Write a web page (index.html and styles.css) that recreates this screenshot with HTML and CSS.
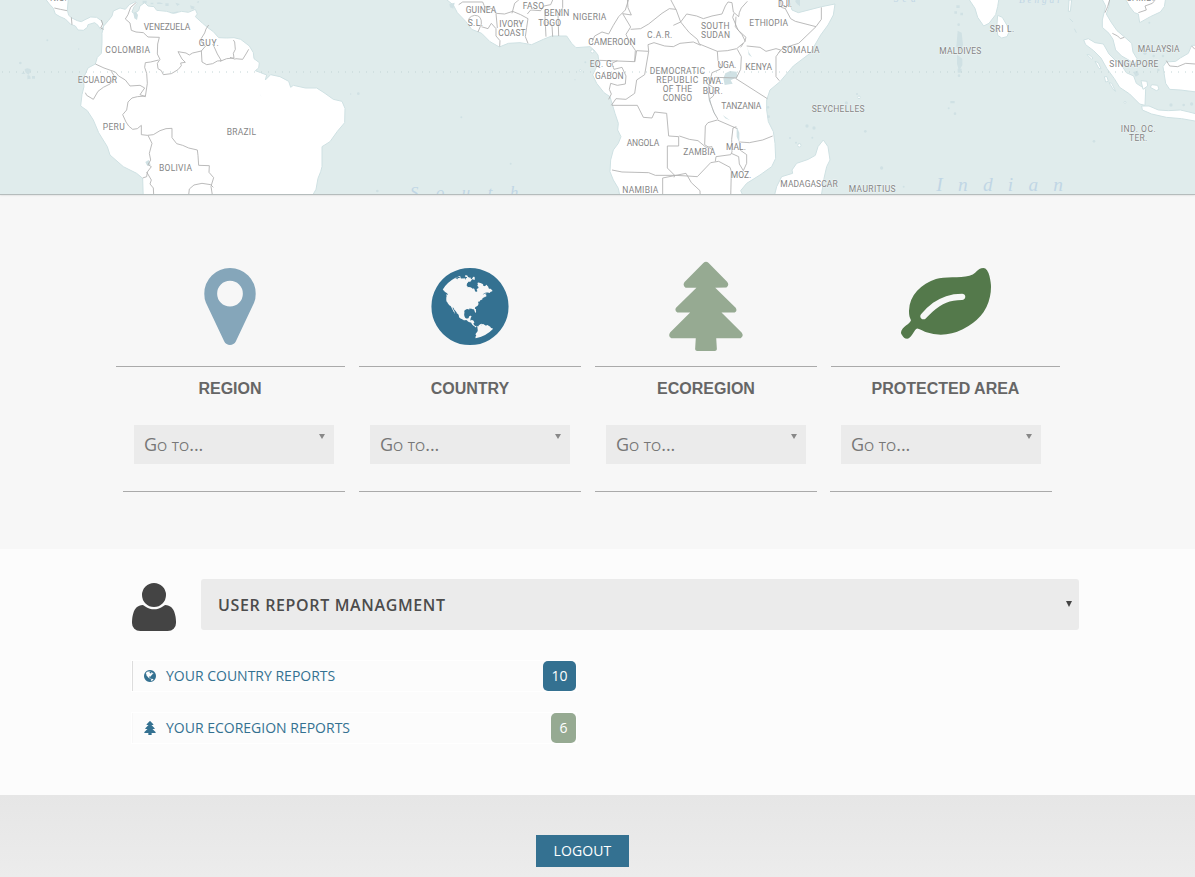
FILE: index.html
```html
<!DOCTYPE html>
<html lang="en">
<head>
<meta charset="utf-8">
<title>Reports</title>
<link rel="stylesheet" href="styles.css">
</head>
<body>
<div class="map">
<svg class="map-svg" width="1195" height="195" viewBox="0 0 1195 195">
  <!-- Americas -->
  <g transform="scale(.333333)">
    <g class="land">
      <path d="M135 -5L148 12 160 25 166 42 180 50 196 57 212 73 226 78 234 90 250 91 262 82 264 74 284 68 294 76 302 89 311 78 304 62 290 52 272 51 255 59 244 65 232 62 216 54 206 46 202 30 205 -5Z"/>
      <path d="M311 78L325 62 336 48 340 33 360 24 376 28 388 14 406 5 412 10 402 20 396 36 402 40 416 32 420 18 434 8 444 18 462 20 470 31 500 34 520 40 545 34 565 37 586 28 592 42 586 50 608 70 622 82 640 95 656 113 680 114 702 113 722 118 748 138 760 158 762 176 778 188 776 204 766 212 782 218 800 225 796 240 812 224 840 230 866 244 872 262 880 256 916 264 950 264 972 278 1000 298 1026 304 1035 325 1034 368 1012 394 990 425 966 440 966 500 962 515 954 535 948 568 930 600 430 600 428 535 410 520 370 500 330 465 322 440 296 398 280 360 262 332 242 318 246 284 252 260 250 235 264 204 286 192 292 172 304 160 306 130 306 100Z"/>
    </g>
    <g class="water">
      <path d="M400 40l8-5 6 10-3 15-8-5zM436 486l10-6 6 14-10 4zM780 282l5 10-3-7z"/>
      <circle cx="142" cy="121" r="3"/><circle cx="236" cy="147" r="2"/><circle cx="61" cy="189" r="4"/><circle cx="1075" cy="281" r="4"/><circle cx="1052" cy="282" r="2"/><circle cx="1132" cy="573" r="4"/>
      <path d="M64 222q6-10 12 0zM74 208q10-8 20 2l-8 14q-12-4-12-16zM82 226q10-2 10 10l-10 2zM96 228h9v8h-9z"/>
      <path d="M428 2h12v8h-12zM452 8h8v5h-8zM470 8q10-4 20 4h-18zM496 10h10v8h-10zM526 8l14 4-8 6zM570 16l14 4-3 8-8-2zM590 6l8-4-3 8zM510 40l24-6-4 6z"/>
    </g>
    <g class="border">
      <path d="M163 24l18 4 20 4M214 52l2 22M311 88l-9-4 6-12-4-12M408 8l-16 14-8 22-8 13 14 12 4 22 14 5 22 2 14 13 34 1-5 20-1 30 8 16-8 12 2 16 10 6 6 12 24-3 20-12 10-12-2-8 14-2-10-10-12-22 24 4 10 6 10-6 26-6 12-14-10-12-2-12 10-16 4-12 8-12M604 152l2 34 14 8 18-3 14-8 12-1-12-20-8-18-6-12M660 184l20-8 22-2-2-14 6-12-2-22-4-6M706 176l22 2 10-16 8-14M706 178l-16-6"/>
      <path d="M476 180l-24 6-16 2-2 14 6 18 2 30-6 40-16-6 14-20-14-8-30 2-14-18-20-12-10-12-34-12-26-12M334 214l10 16-14 22-20 10-16 12-14 24-20-12-4-8M436 288l-24 2-16 4-12 12-4 24-12 14 10 22 8 12 12 10 14-2 12-10v28l18 2 18-2 20-12 18-6 18-1v28l14 18 18 5 18 8 26 6 2 16 2 30 32 1-1 20 14 16-8 26 4 26M444 406l12 24-8 30 4 20-8 14 10 6-12 16-2 14-12 4M440 516l14 24-4 12 10 12 1 20M566 585l2-18 14-12 24-5 26 4 8 8"/>
    </g>
    <g class="label">
      <text x="150" y="4" textLength="50">NIC.</text>
      <text x="431" y="90" textLength="140">VENEZUELA</text>
      <text x="316" y="159" textLength="134">COLOMBIA</text>
      <text x="596" y="140" textLength="60">GUY.</text>
      <text x="233" y="250" textLength="118">ECUADOR</text>
      <text x="308" y="392" textLength="66">PERU</text>
      <text x="680" y="405" textLength="88">BRAZIL</text>
      <text x="477" y="515" textLength="99">BOLIVIA</text>
    </g>
  </g>
  <!-- Africa -->
  <g transform="translate(400 0) scale(.333333)">
    <g class="land">
      <path d="M135 -5L160 15 172 38 198 65 215 88 245 100 270 125 298 141 325 130 360 128 395 134 430 118 455 108 500 108 515 130 528 143 570 140 582 150 594 165 596 180 590 200 578 225 590 250 612 278 630 290 636 310 645 340 655 370 653 390 663 410 655 430 640 450 632 480 630 515 640 540 655 565 662 600 1035 600 1022 572 1040 550 1080 525 1115 500 1127 475 1125 430 1120 395 1105 365 1100 330 1100 300 1110 270 1140 245 1180 198 1230 160 1262 105 1284 75 1300 45 1305 12 1265 20 1195 38 1176 30 1165 -5Z"/>
      <path d="M1120 600L1130 560 1145 530 1178 520 1176 510 1190 490 1225 478 1246 466 1254 440 1270 420 1284 440 1290 480 1280 500 1272 535 1262 600Z"/>
      <circle cx="577" cy="154" r="5"/><circle cx="541" cy="212" r="3"/>
    </g>
    <g class="water">
      <path d="M976 220l14-7 20 2 2 16-20 10 6 10-24 4-4-20zM1042 140l4 16 10 16-10-8zM930 292l4 26 20 40-14-22-14-36zM1010 380l8 18v30l-8-18zM968 345l22 16-14-6zM1188 -5l-2 10 6 8 8 6V-5zM148 12l16-4-4 18-10-4z"/>
      <circle cx="184" cy="352" r="3"/><circle cx="332" cy="491" r="3"/><circle cx="556" cy="187" r="3"/><circle cx="525" cy="239" r="2"/><circle cx="1170" cy="414" r="3"/><circle cx="1188" cy="428" r="3"/><circle cx="1198" cy="434" r="4"/><circle cx="1104" cy="322" r="4"/><circle cx="1106" cy="350" r="4"/>
    </g>
    <g class="border">
      <path d="M176 14l12-8h60l6 14 22 6 12 14 26 2 24-8 24 10 22 12-4 26-4 28 8 20M206 68q-4-18 18-22 22 0 20 26l-10 24M244 80l20 6 10-16 14 16v22l12 14-1 18M288 40l4 44M336 40l8-30 14-12M382 42l10-12 30 2 10-14 20-4 6-14M434 30l4 80M440 66l16 10 2 34M474 42l2 66M488 -5v28l-12 20M576 126l8-18 22-12 20 6 14-26 16-26 20-20 10-32M682 -5l2 28 10 22-26-4 24 40-14 22 10 22 18 26-2 34-106-4M692 88l30-2 24-14 40-32 22-14 20 2 14 38-22 10M810 -5l18 34M842 66l16 20 10 12 24 20 6 14 54 22 30-2 28-6 24-20 4-14-24-22-16-38 4-12M842 66l18-24 30 6 20 8 26-8 30-6 10-24 8-12 12 2 4 28 16 14 2-12 6-14 18-20M704 186l6-34 36 2-2-20 18-6 32 10 26 2 20-10 40-4 22 10"/>
      <path d="M746 154l-12 70-24 16-6 40-26 18-30-2-14 20M652 182l-16 8 6 18 24-6 12 26-2 24-24 4-20-6-4 18 6 14-8 16M636 316h76l18 36 26 2 8-18 36 4 6 68 30 2v28h-34v66l22 22-2 6M838 408l30 10 26 4 24 20 18-2 2 10-24-16 2-56 8-10 28-8 60 26M636 510l30 6 80 2 20 8 60 0 36 2 30 2 40-42 24-4 34 18 4 12-2 80M788 600v-66l70-14 16 28 26 24 1 28M946 484l2-14 44-6 4-8-1-38 4-34 10-4M994 460l22 10 2 22 12 20 10-22 0-26-20-14-2-24 30 2 40-8 30-12M952 154l2 28 10 16-4 10-24 10-12 52 4 28 14 40 12 20M1012 148l12 22-2 38-14 28 94 60M946 232l62 2M920 250l26 16-6 22-10 8M1030 130l-8 12M1040 138l40 4 18 12 30-8 14 4-14 20v60l10 12M1008 50l-2 30 20 24 10 20M1142 0l2 22 12 4 8-12M1156 26l16 30 14 8 62 16 16-22V22M1248 80l-52 50-46 14-14 14"/>
    </g>
    <g class="label">
      <text x="197" y="41" textLength="92">GUINEA</text>
      <text x="342" y="2" textLength="92">BURKINA</text>
      <text x="368" y="28" textLength="64">FASO</text>
      <text x="433" y="50" textLength="75">BENIN</text>
      <text x="415" y="79" textLength="68">TOGO</text>
      <text x="203" y="80" textLength="46">S.L.</text>
      <text x="298" y="82" textLength="73">IVORY</text>
      <text x="295" y="109" textLength="82">COAST</text>
      <text x="518" y="62" textLength="101">NIGERIA</text>
      <text x="565" y="135" textLength="142">CAMEROON</text>
      <text x="741" y="114" textLength="76">C.A.R.</text>
      <text x="903" y="88" textLength="86">SOUTH</text>
      <text x="903" y="115" textLength="87">SUDAN</text>
      <text x="1048" y="79" textLength="116">ETHIOPIA</text>
      <text x="1134" y="21" textLength="42">DJI.</text>
      <text x="569" y="201" textLength="74">EQ. G.</text>
      <text x="585" y="237" textLength="86">GABON</text>
      <text x="749" y="223" textLength="166">DEMOCRATIC</text>
      <text x="769" y="250" textLength="126">REPUBLIC</text>
      <text x="788" y="277" textLength="88">OF THE</text>
      <text x="788" y="304" textLength="88">CONGO</text>
      <text x="908" y="252" textLength="62">RWA.</text>
      <text x="908" y="282" textLength="60">BUR.</text>
      <text x="953" y="205" textLength="56">UGA.</text>
      <text x="1036" y="211" textLength="80">KENYA</text>
      <text x="1145" y="159" textLength="114">SOMALIA</text>
      <text x="964" y="328" textLength="120">TANZANIA</text>
      <text x="680" y="438" textLength="98">ANGOLA</text>
      <text x="850" y="466" textLength="96">ZAMBIA</text>
      <text x="978" y="450" textLength="60">MAL.</text>
      <text x="992" y="536" textLength="62">MOZ.</text>
      <text x="667" y="581" textLength="108">NAMIBIA</text>
      <text x="1141" y="563" textLength="172">MADAGASCAR</text>
    </g>
    <text class="sea" x="30" y="594" font-size="50" textLength="325">South</text>
  </g>
  <!-- Indian Ocean -->
  <g transform="translate(795 0) scale(.333333)">
    <g class="land">
      <path d="M520 -5L540 25 548 52 566 78 582 70 602 44 608 20 612 -5ZM608 46L622 52 636 76 642 96 636 110 620 114 608 106 606 72Z"/>
      <path d="M920 -5L932 18 922 60 922 82 942 100 954 118 962 150 980 168 1008 184 1020 196 1026 176 1014 156 1010 130 990 112 966 92 948 66 934 42 942 20 944 -5ZM990 -5L1004 20 1018 38 1030 42 1034 68 1066 50 1096 36 1108 20 1112 -5ZM866 120L880 116 900 128 925 132 942 162 960 180 976 190 994 218 1016 228 1024 250 1052 268 1050 316 1034 312 1004 282 974 262 958 236 936 206 918 174 896 152 872 134ZM1205 136L1190 136 1180 160 1156 174 1142 184 1114 186 1104 200 1112 250 1124 268 1156 270 1205 276ZM1040 318L1062 318 1090 330 1120 332 1156 330 1182 336 1205 342V364L1160 356 1114 352 1070 342 1042 330Z"/>
      <path d="M876 164l14 14 4-4-12-10zM900 184l12 22 6 0-8-18zM928 230l4 16 8-2-4-14zM942 248l14 22 6 4-12-24zM1038 242l18 2 2 14-14 10zM1066 262l4-8 18 2 4 12-8 4zM822 0l-2 34 6 0 4-34zM824 56l10 10M838 86l6 12"/>
      <circle cx="13" cy="436" r="5"/><circle cx="192" cy="292" r="4"/><circle cx="990" cy="307" r="3"/>
    </g>
    <g class="water">
      <path d="M484 16h10v8h-10zM478 34h8v7h-8zM496 38h8v8h-8zM488 92l12 6 4 36-8 22-12-16zM486 164l16 12v20l-10 16-6-20zM488 206h12v12h-12zM1014 216l14-4 4 12-10 6zM466 303h13v7h-13z"/>
      <circle cx="491" cy="74" r="4"/><circle cx="492" cy="227" r="4"/><circle cx="461" cy="325" r="3"/><circle cx="480" cy="341" r="4"/><circle cx="154" cy="309" r="5"/><circle cx="186" cy="282" r="3"/><circle cx="211" cy="394" r="4"/><circle cx="260" cy="504" r="5"/><circle cx="326" cy="560" r="3"/><circle cx="36" cy="378" r="5"/><circle cx="57" cy="384" r="5"/><circle cx="52" cy="413" r="3"/><circle cx="897" cy="424" r="4"/><circle cx="1063" cy="68" r="3"/><circle cx="1050" cy="160" r="5"/><circle cx="1076" cy="168" r="4"/><circle cx="1104" cy="168" r="4"/><circle cx="1090" cy="210" r="4"/><circle cx="1128" cy="315" r="5"/><circle cx="1166" cy="315" r="4"/><circle cx="1190" cy="312" r="5"/>
    </g>
    <g class="border">
      <path d="M944 0l-6 20-8 18M952 100l16 8 8 8 12-4M1030 38l24-8-4-12 22-8 10-12M1114 182l10 16 24 2 24-10 28 2M1190 138l10 10"/>
    </g>
    <g class="label">
      <text x="584" y="96" textLength="74">SRI L.</text>
      <text x="433" y="163" textLength="126">MALDIVES</text>
      <text x="50" y="338" textLength="159">SEYCHELLES</text>
      <text x="161" y="578" textLength="141">MAURITIUS</text>
      <text x="977" y="396" textLength="105">IND. OC.</text>
      <text x="1002" y="423" textLength="55">TER.</text>
      <text x="943" y="203" textLength="147">SINGAPORE</text>
      <text x="1028" y="158" textLength="126">MALAYSIA</text>
      <text x="994" y="5" textLength="84">CAMB.</text>
    </g>
    <text class="sea" x="296" y="6" font-size="28" textLength="66">Sea</text>
    <text class="sea" x="672" y="9" font-size="28" textLength="122">Bengal</text>
    <text class="sea" x="424" y="573" font-size="58" textLength="380">Indian</text>
  </g>
  <path class="equator" d="M2 72H1195"/>
</svg>
</div>

<main class="picker">
  <section class="column">
    <div class="column-head head-first">
      <svg class="icon region" viewBox="0 0 1792 1792"><path d="M1152 640q0-106-75-181t-181-75-181 75-75 181 75 181 181 75 181-75 75-181zm256 0q0 109-33 179l-364 774q-16 33-47.500 52t-67.500 19-67.500-19-46.500-52l-365-774q-33-70-33-179 0-212 150-362t362-150 362 150 150 362z"/></svg>
    </div>
    <h2>REGION</h2>
    <div class="select">Go to...<i class="arrow"></i></div>
    <div class="rule"></div>
  </section>
  <section class="column">
    <div class="column-head">
      <svg class="icon country" viewBox="0 0 1792 1792"><path id="globe" d="M896 128q209 0 385.500 103t279.500 279.500 103 385.500-103 385.500-279.500 279.500-385.500 103-385.500-103-279.500-279.500-103-385.500 103-385.500 279.500-279.500 385.500-103zm274 521q-2 1-9.500 9.500t-13.500 9.500q2 0 4.500-5t5-11 3.500-7q6-7 22-15 14-6 52-12 34-8 51 11-2-2 9.500-13t14.500-12q3-2 15-4.500t15-7.500l2-22q-12 1-17.500-7t-6.500-21q0 2-6 8 0-7-4.500-8t-11.500 1-9 1q-10-3-15-7.500t-8-16.500-4-15q-2-5-9.500-11t-9.500-10q-1-2-2.500-5.500t-3-6.500-4-5.500-5.500-2.500-7 5-7.500 10-4.500 5q-3-2-6-1.500t-4.500 1-4.500 3-5 3.500q-3 2-8.500 3t-8.500 2q15-5-1-11-10-4-16-3 9-4 7.500-12t-8.500-14h5q-1-4-8.500-8.500t-17.500-8.500-13-6q-8-5-34-9.500t-33-.5q-5 6-4.500 10.500t4 14 3.500 12.500q1 6-5.500 13t-6.500 12q0 7 14 15.500t10 21.500q-3 8-16 16t-16 12q-5 8-1.500 18.500t10.500 16.500q2 2 1.500 4t-3.500 4.500-5.500 4-6.500 3.500l-3 2q-11 5-20.500-6t-13.500-26q-7-25-16-30-23-8-29 1-5-13-41-26-25-9-58-4 6-1 0-15-7-15-19-12 3-6 4-17.500t1-13.500q3-13 12-23 1-1 7-8.500t9.500-13.500.5-6q35 4 50-11 5-5 11.500-17t10.500-17q9-6 14-5.500t14.500 5.500 14.500 5q14 1 15.500-11t-7.500-20q12 1 3-17-4-7-8-9-12-4-27 5-8 4 2 8-1-1-9.500 10.500t-16.500 17.500-16-5q-1-1-5.500-13.500t-9.500-13.500q-8 0-16 15 3-8-11-15t-24-8q19-12-8-27-7-4-20.500-5t-19.500 4q-5 7-5.500 11.500t5 8 10.500 5.500 11.500 4 8.500 3q14 10 8 14-2 1-8.500 3.500t-11.500 4.500-6 4q-3 4 0 14t-2 14q-5-5-9-17.500t-7-16.500q7 9-25 6l-10-1q-4 0-16 2t-20.500 1-13.500-8q-4-8 0-20 1-4 4-2-4-3-11-9.500t-10-8.500q-46 15-94 41 6 1 12-1 5-2 13-6.500t10-5.500q34-14 42-7l5-5q14 16 20 25-7-4-30-1-20 6-22 12 7 12 5 18-4-3-11.500-10t-14.500-11-15-5q-16 0-22 1-146 80-235 222 7 7 12 8 4 1 5 9t2.500 11 11.500-3q9 8 3 19 1-1 44 27 19 17 21 21 3 11-10 18-1-2-9-9t-9-4q-3 5 .5 18.500t10.500 12.500q-7 0-9.500 16t-2.500 35.500-1 23.500l2 1q-3 12 5.500 34.500t21.500 19.500q-13 3 20 43 6 8 8 9 3 2 12 7.500t15 10 10 10.500q4 5 10 22.500t14 23.500q-2 6 9.500 20t10.500 23q-1 0-2.500 1t-2.500 1q3 7 15.500 14t15.500 13q1 3 2 10t3 11 8 2q2-20-24-62-15-25-17-29-3-5-5.500-15.500t-4.500-14.500q2 0 6 1.500t8.500 3.500 7.500 4 2 3q-3 7 2 17.500t12 18.500 17 19 12 13q6 6 14 19.500t0 13.500q9 0 20 10t17 20q5 8 8 26t5 24q2 7 8.500 13.500t12.500 9.500l16 8 13 7q5 2 18.500 10.500t21.500 11.500q10 4 16 4t14.500-2.500 13.500-3.500q15-2 29 15t21 21q36 19 55 11-2 1 .5 7.500t8 15.500 9 14.500 5.500 8.500q5 6 18 15t18 15q6-4 7-9-3 8 7 20t18 10q14-3 14-32-31 15-49-18 0-1-2.500-5.500t-4-8.500-2.500-8.500 0-7.500 5-3q9 0 10-3.500t-2-12.500-4-13q-1-8-11-20t-12-15q-5 9-16 8t-16-9q0 1-1.500 5.500t-1.500 6.500q-13 0-15-1 1-3 2.500-17.500t3.500-22.500q1-4 5.500-12t7.500-14.500 4-12.500-4.500-9.500-17.500-2.500q-19 1-26 20-1 3-3 10.500t-5 11.500-9 7q-7 3-24 2t-24-5q-13-8-22.500-29t-9.500-37q0-10 2.500-26.500t3-25-5.500-24.500q3-2 9-9.500t10-10.500q2-1 4.500-1.500t4.500 0 4-1.500 3-6q-1-1-4-3-3-3-4-3 7 3 28.500-1.500t27.500 1.500q15 11 22-2 0-1-2.500-9.500t-.5-13.500q5 27 29 9 3 3 15.500 5t17.500 5q3 2 7 5.500t5.500 4.500 5-.5 8.500-6.500q10 14 12 24 11 40 19 44 7 3 11 2t4.500-9.500 0-14-1.500-12.500l-1-8v-18l-1-8q-15-3-18.500-12t1.500-18.500 15-18.500q1-1 8-3.500t15.500-6.500 12.500-8q21-19 15-35 7 0 11-9-1 0-5-3t-7.500-5-4.500-2q9-5 2-16 5-3 7.500-11t7.500-10q9 12 21 2 7-8 1-16 5-7 20.500-10.500t18.500-9.500q7 2 8-2t1-12 3-12q4-5 15-9t13-5l17-11q3-4 0-4 18 2 31-11 10-11-6-20 3-6-3-9.500t-15-5.500q3-1 11.500-.5t10.500-1.500q15-10-7-16-17-5-43 12zm-163 877q206-36 351-189-3-3-12.500-4.500t-12.500-3.500q-18-7-24-8 1-7-2.500-13t-8-9-12.500-8-11-7q-2-2-7-6t-7-5.500-7.500-4.500-8.500-2-10 1l-3 1q-3 1-5.500 2.500t-5.500 3-4 3 0 2.500q-21-17-36-22-5-1-11-5.500t-10.500-7-10-1.500-11.500 7q-5 5-6 15t-2 13q-7-5 0-17.500t2-18.500q-3-6-10.500-4.500t-12 4.500-11.500 8.500-9 6.500-8.500 5.500-8.500 7.500q-3 4-6 12t-5 11q-2-4-11.500-6.500t-9.500-5.500q2 10 4 35t5 38q7 31-12 48-27 25-29 40-4 22 12 26 0 7-8 20.500t-7 21.500q0 6 2 16z"/></svg>
    </div>
    <h2>COUNTRY</h2>
    <div class="select">Go to...<i class="arrow"></i></div>
    <div class="rule"></div>
  </section>
  <section class="column">
    <div class="column-head">
      <svg class="icon ecoregion" viewBox="211.500 34.500 273 273"><path id="tree" d="M340 39q8-7 16 0l56 57q8 10-2 17l-34 1 62 61q6 10-3 14h-40l61 61q8 11-3 17h-74l2 34q-1 5-6 5h-54q-5 0-6-5l2-34h-74q-11-5-4-17l61-61h-39q-9-5-4-14l62-61h-33q-10-7-3-17z"/></svg>
    </div>
    <h2>ECOREGION</h2>
    <div class="select">Go to...<i class="arrow"></i></div>
    <div class="rule"></div>
  </section>
  <section class="column last">
    <div class="column-head head-last">
      <svg class="icon protected" viewBox="0 0 1792 1792"><path d="M1280 704q0-26-19-45t-45-19q-172 0-318 49.500t-259.500 134-235.500 219.500q-19 21-19 45 0 26 19 45t45 19q24 0 45-19 27-24 74-71t67-66q137-124 268.500-176t313.500-52q26 0 45-19t19-45zm512-198q0 95-20 193-46 224-184.500 383t-357.500 268q-214 108-438 108-148 0-286-47-15-5-88-42t-96-37q-16 0-39.500 32t-45 70-52.500 70-60 32q-43 0-63.500-17.500t-45.500-59.500q-2-4-6-11t-5.500-10-3-9.500-1.500-13.500q0-35 31-73.500t68-65.500 68-56 31-48q0-4-14-38t-16-44q-9-51-9-104 0-115 43.500-220t119-184.500 170.500-139 204-95.500q55-18 145-25.500t179.500-9 178.500-6 163.500-24 113.500-56.500l29.500-29.500 29.500-28 27-20 36.500-16 43.500-4.500q39 0 70.500 46t47.500 112 24 124 8 96z"/></svg>
    </div>
    <h2>PROTECTED AREA</h2>
    <div class="select">Go to...<i class="arrow"></i></div>
    <div class="rule"></div>
  </section>
</main>

<section class="reports">
  <div class="reports-head">
    <svg class="user" viewBox="192 128 1408 1536"><path d="M1600 1405q0 120-73 189.500t-194 69.500h-874q-121 0-194-69.500t-73-189.500q0-53 3.500-103.500t14-109 26.500-108.500 43-97.500 62-81 85.500-53.500 111.500-20q9 0 42 21.500t74.500 48 108 48 133.500 21.500 133.500-21.500 108-48 74.500-48 42-21.500q61 0 111.500 20t85.500 53.500 62 81 43 97.500 26.500 108.500 14 109 3.500 103.500zm-320-893q0 159-112.500 271.500t-271.500 112.500-271.500-112.500-112.500-271.500 112.500-271.500 271.500-112.500 271.500 112.500 112.500 271.500z"/></svg>
    <div class="report-bar"><span>USER REPORT MANAGMENT</span><i class="arrow"></i></div>
  </div>
  <div class="report-row current">
    <svg class="mini" viewBox="128 128 1536 1536"><use href="#globe"/></svg>
    <span class="report-name country-name">YOUR COUNTRY REPORTS</span>
    <span class="badge blue">10</span>
  </div>
  <div class="report-row">
    <svg class="mini tree" viewBox="236 34.500 224 273"><use href="#tree"/></svg>
    <span class="report-name">YOUR ECOREGION REPORTS</span>
    <span class="badge green">6</span>
  </div>
</section>

<footer class="footer"><a class="logout">LOGOUT</a></footer>
</body>
</html>
```
FILE: styles.css
```css
* { box-sizing: border-box; }
body {
  margin: 0;
  height: 877px;
  overflow: hidden;
  background: #f7f7f7;
  font-family: "Open Sans", sans-serif;
}

/* Map banner */
.map { height: 195px; background: #e0ecec; overflow: hidden; border-bottom: 1px solid #b5bcbc; box-shadow: 0 0 2px #ccc; }
.map-svg { display: block; }
.land { fill: #fff; stroke: #cfe1e3; stroke-width: 3; stroke-linejoin: round; }
.water { fill: #d0e1e4; }
.border { fill: none; stroke: #b0b0b0; stroke-width: 2.6; stroke-linejoin: round; }
.label {
  font: 25.5px Roboto, sans-serif;
  fill: #858585;
  stroke: #fff;
  stroke-opacity: .5;
  stroke-width: 3;
  paint-order: stroke;
}
.label text { transform: translateY(-1px); }
.sea { font-family: "Liberation Serif", serif; font-style: italic; fill: #c0d6e5; }
.equator { stroke: #c2d4d5; stroke-width: 1; stroke-dasharray: 1 6; }

/* Area pickers */
.picker { height: 354px; padding: 66px 0 0 116px; display: grid; grid-template-columns: repeat(4, 236px); align-items: start; }
.column-head { height: 106px; margin: 0 7px; padding-right: 1px; border-bottom: 1px solid #aaa; display: flex; justify-content: center; }
.head-first { margin-left: 0; }
.head-last { margin-right: 0; padding-right: 0; }
.icon { width: 90px; height: 91px; }
.region { fill: #85a6ba; }
.country { fill: #347191; }
.ecoregion { fill: #96aa92; }
.protected { fill: #54794b; }
.column h2 {
  margin: 12px 7px 0;
  height: 20px;
  font: bold 16px/20px "Liberation Sans", sans-serif;
  color: #666;
  text-align: center;
}
.column:first-child h2 { margin-left: 0; margin-right: 8px; }
.column.last h2 { margin-right: 0; }
.select {
  width: 200px;
  height: 39px;
  margin: 26px 0 0 18px;
  padding: 0 9px 0 10px;
  display: flex;
  justify-content: space-between;
  background: #ebebeb;
  color: #777;
  font-size: 18px;
  line-height: 39px;
  font-variant: small-caps;
}
.arrow { width: 0; height: 0; border: solid transparent; border-top-color: #888; border-width: 5px 3.5px 0; }
.select .arrow { margin-top: 9px; }
.rule { width: 222px; height: 1px; margin: 27px 0 0 7px; background: #aaa; }
.last .select { margin-left: 17px; }
.last .rule { margin-left: 6px; }

/* User reports */
.reports { height: 246px; padding: 30px 116px 0 132px; background: #fcfcfc; }
.reports-head { display: flex; gap: 25px; }
.user { width: 44px; height: 48px; margin-top: 4px; fill: #444; }
.report-bar {
  width: 878px;
  height: 51px;
  padding: 0 7px 0 17px;
  display: flex;
  align-items: center;
  justify-content: space-between;
  border-radius: 3px;
  background: #ebebeb;
  color: #4c4c4c;
  font-size: 16px;
  font-weight: 600;
  letter-spacing: .64px;
}
.report-bar .arrow { margin-bottom: 2px; border-top-color: #444; border-width: 6px 3px 0; }
.report-row {
  width: 444px;
  height: 30px;
  margin-top: 22px;
  padding-left: 11px;
  display: flex;
  align-items: center;
  border-left: 1px solid #f7f7f7;
  box-shadow: 0 0 0 1px #fff;
}
.current { margin-top: 31px; border-left-color: #ddd; }
.reports-head { height: 51px; }
.mini { width: 12px; height: 12px; fill: #347191; }
.tree { height: 14px; }
.report-name { margin-left: 10px; padding-bottom: 2px; color: #347191; font-size: 14px; }
.badge { height: 30px; margin-left: auto; padding: 0 8.5px; border-radius: 5px; color: #fff; font-size: 14px; line-height: 30px; }
.blue { background: #347191; }
.green { background: #96aa92; }
.current { margin-top: 31px; }

/* Footer */
.footer { height: 82px; padding: 40px 0 0 536px; background: linear-gradient(#e6e6e6, #ececec); }
.logout { display: block; width: 93px; height: 32px; background: #347191; color: #fff; font-size: 14px; line-height: 32px; letter-spacing: .1px; text-align: center; }
```
